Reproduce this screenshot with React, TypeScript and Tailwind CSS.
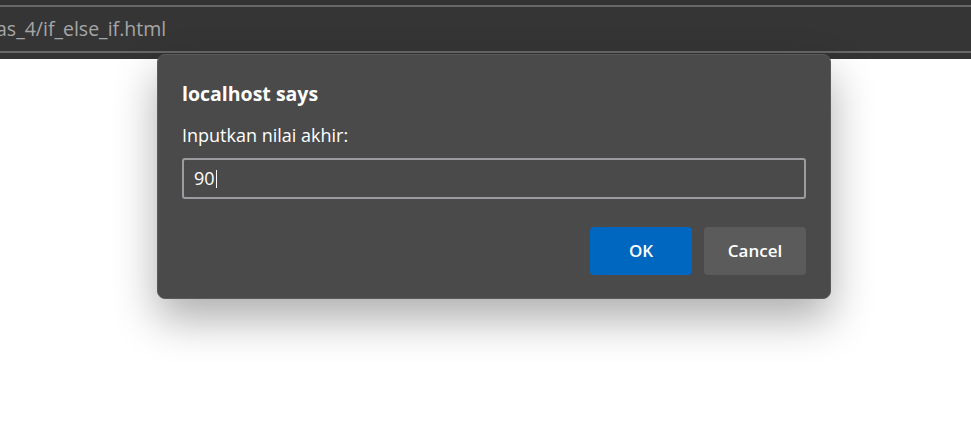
export default function App() {
  return (
    <div className="relative h-[422px] w-[971px] overflow-hidden bg-white font-['Open_Sans',sans-serif]">
      {/* browser chrome */}
      <div className="flex h-[59px] flex-col bg-[#333333]">
        <div className="h-[5px]" />
        <div className="h-[2px] bg-[#676767]" />
        <div className="flex h-[44px] items-center overflow-hidden bg-[#353535]">
          <span className="-ml-[4px] whitespace-nowrap text-[19.5px] text-[#a6a6a6]">as_4/if_else_if.html</span>
        </div>
        <div className="h-[2px] bg-[#676767]" />
      </div>

      {/* prompt dialog */}
      <div className="absolute left-[157px] top-[54px] flex h-[245px] w-[674px] flex-col rounded-[8px] border border-[#5a5a5a] bg-[#4a4a4a] px-6 pt-[27px] shadow-[0_20px_44px_rgba(0,0,0,0.32)]">
        <div className="text-[19.5px] font-bold leading-[24px] text-white">localhost says</div>
        <div className="mt-[17px] text-[18px] leading-[24px] text-white">Inputkan nilai akhir:</div>
        <div className="mt-[11px] flex h-[41px] items-center rounded-[3px] border-2 border-[#9a9ca0] px-[10px] text-[18px] text-white">
          90
          <span className="ml-px h-[18px] w-px bg-white" />
        </div>
        <div className="mt-[28px] flex justify-end gap-3">
          <button className="h-[48px] w-[102px] rounded-[4px] bg-[#0067c0] text-[17px] font-semibold text-white">OK</button>
          <button className="h-[48px] w-[102px] rounded-[4px] bg-[#5b5b5b] text-[17px] font-semibold text-white">Cancel</button>
        </div>
      </div>
    </div>
  );
}
